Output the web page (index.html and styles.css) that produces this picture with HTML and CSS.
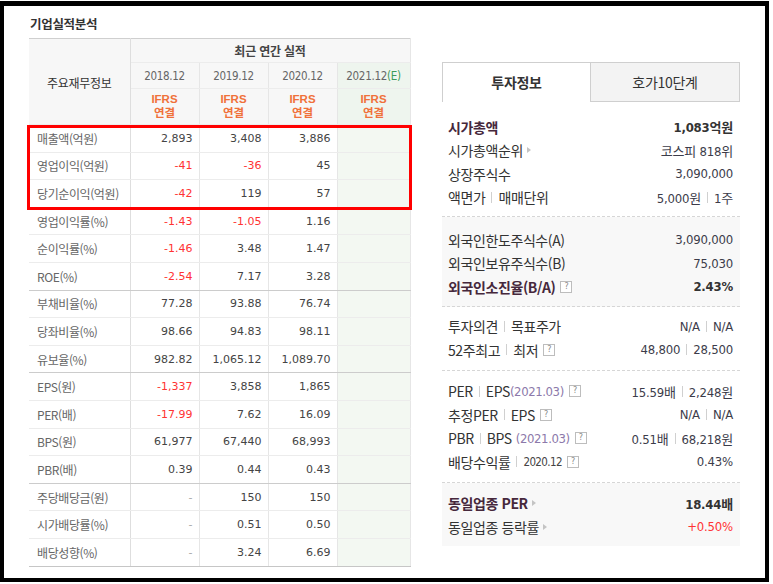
FILE: index.html
```html
<!DOCTYPE html>
<html lang="ko">
<head>
<meta charset="utf-8">
<title>기업실적분석</title>
<link rel="stylesheet" href="styles.css">
</head>
<body>
<div class="frame">
  <section class="perf">
    <h2 class="title">기업실적분석</h2>
    <div class="table-wrap">
      <table class="fin">
        <colgroup>
          <col class="c-lab"><col class="c-y"><col class="c-y"><col class="c-y"><col class="c-e">
        </colgroup>
        <thead>
          <tr class="h1"><th rowspan="3" class="lab-h">주요재무정보</th><th colspan="4" class="grp-h">최근 연간 실적</th></tr>
          <tr class="h2"><th>2018.12</th><th>2019.12</th><th>2020.12</th><th class="est">2021.12<span class="e">(E)</span></th></tr>
          <tr class="h3"><th><span class="ifrs">IFRS<br>연결</span></th><th><span class="ifrs">IFRS<br>연결</span></th><th><span class="ifrs">IFRS<br>연결</span></th><th class="est"><span class="ifrs">IFRS<br>연결</span></th></tr>
        </thead>
        <tbody>
          <tr><th>매출액(억원)</th><td>2,893</td><td>3,408</td><td>3,886</td><td class="est"></td></tr>
          <tr><th>영업이익(억원)</th><td class="neg">-41</td><td class="neg">-36</td><td>45</td><td class="est"></td></tr>
          <tr><th>당기순이익(억원)</th><td class="neg">-42</td><td>119</td><td>57</td><td class="est"></td></tr>
          <tr><th>영업이익률(%)</th><td class="neg">-1.43</td><td class="neg">-1.05</td><td>1.16</td><td class="est"></td></tr>
          <tr><th>순이익률(%)</th><td class="neg">-1.46</td><td>3.48</td><td>1.47</td><td class="est"></td></tr>
          <tr class="grp"><th>ROE(%)</th><td class="neg">-2.54</td><td>7.17</td><td>3.28</td><td class="est"></td></tr>
          <tr><th>부채비율(%)</th><td>77.28</td><td>93.88</td><td>76.74</td><td class="est"></td></tr>
          <tr><th>당좌비율(%)</th><td>98.66</td><td>94.83</td><td>98.11</td><td class="est"></td></tr>
          <tr class="grp"><th>유보율(%)</th><td>982.82</td><td>1,065.12</td><td>1,089.70</td><td class="est"></td></tr>
          <tr><th>EPS(원)</th><td class="neg">-1,337</td><td>3,858</td><td>1,865</td><td class="est"></td></tr>
          <tr><th>PER(배)</th><td class="neg">-17.99</td><td>7.62</td><td>16.09</td><td class="est"></td></tr>
          <tr><th>BPS(원)</th><td>61,977</td><td>67,440</td><td>68,993</td><td class="est"></td></tr>
          <tr class="grp"><th>PBR(배)</th><td>0.39</td><td>0.44</td><td>0.43</td><td class="est"></td></tr>
          <tr><th>주당배당금(원)</th><td class="dash">-</td><td>150</td><td>150</td><td class="est"></td></tr>
          <tr><th>시가배당률(%)</th><td class="dash">-</td><td>0.51</td><td>0.50</td><td class="est"></td></tr>
          <tr class="last"><th>배당성향(%)</th><td class="dash">-</td><td>3.24</td><td>6.69</td><td class="est"></td></tr>
        </tbody>
      </table>
      <div class="highlight"></div>
    </div>
  </section>

  <aside class="invest">
    <div class="tabs">
      <div class="tab on">투자정보</div>
      <div class="tab">호가10단계</div>
    </div>
    <div class="sec s1">
      <div class="row strong"><span class="k">시가총액</span><span class="v">1,083억원</span></div>
      <div class="row"><span class="k">시가총액순위<i class="arr"></i></span><span class="v">코스피 818위</span></div>
      <div class="row"><span class="k">상장주식수</span><span class="v">3,090,000</span></div>
      <div class="row"><span class="k">액면가<i class="sep"></i>매매단위</span><span class="v">5,000원<i class="sep"></i>1주</span></div>
    </div>
    <div class="sec gray s2">
      <div class="row"><span class="k">외국인한도주식수(A)</span><span class="v">3,090,000</span></div>
      <div class="row"><span class="k">외국인보유주식수(B)</span><span class="v">75,030</span></div>
      <div class="row strong"><span class="k">외국인소진율(B/A)<i class="help">?</i></span><span class="v">2.43%</span></div>
    </div>
    <div class="sec s3">
      <div class="row"><span class="k">투자의견<i class="sep"></i>목표주가</span><span class="v">N/A<i class="sep"></i>N/A</span></div>
      <div class="row"><span class="k">52주최고<i class="sep"></i>최저<i class="help">?</i></span><span class="v">48,800<i class="sep"></i>28,500</span></div>
    </div>
    <div class="sec s4">
      <div class="row"><span class="k">PER<i class="sep"></i>EPS<em class="dt">(2021.03)</em><i class="help">?</i></span><span class="v">15.59배<i class="sep"></i>2,248원</span></div>
      <div class="row"><span class="k">추정PER<i class="sep"></i>EPS<i class="help">?</i></span><span class="v">N/A<i class="sep"></i>N/A</span></div>
      <div class="row"><span class="k">PBR<i class="sep"></i>BPS<em class="dt spaced">(2021.03)</em><i class="help">?</i></span><span class="v">0.51배<i class="sep"></i>68,218원</span></div>
      <div class="row"><span class="k">배당수익률<i class="sep"></i><small class="ym">2020.12</small><i class="help">?</i></span><span class="v">0.43%</span></div>
    </div>
    <div class="sec gray s5">
      <div class="row strong"><span class="k">동일업종 PER<i class="arr"></i></span><span class="v">18.44배</span></div>
      <div class="row"><span class="k">동일업종 등락률<i class="arr"></i></span><span class="v up">+0.50%</span></div>
    </div>
  </aside>
</div>
</body>
</html>
```

FILE: styles.css
```css
* { box-sizing: border-box; }

html, body {
  margin: 0;
  padding: 0;
  background: #fff;
}

body {
  font-family: "Noto Sans CJK KR", "Noto Sans", sans-serif;
  color: #333;
}

.frame {
  margin-top: 1px;
  width: 769px;
  height: 581px;
  border: 4px solid #000;
  border-top-width: 5px;
  display: flex;
  align-items: flex-start;
}

/* ---------- left: performance table ---------- */
.perf {
  padding: 10px 0 0 25px;
  width: 406px;
  flex: none;
}

.title {
  margin: 0 0 6px 1px;
  height: 16px;
  line-height: 16px;
  font-size: 12.5px;
  font-weight: bold;
  color: #333;
  letter-spacing: -0.3px;
}

.table-wrap {
  position: relative;
  width: 381px;
}

.fin {
  width: 381px;
  border-collapse: collapse;
  table-layout: fixed;
  border-top: 1px solid #cfcfcf;
}

.c-lab { width: 101px; }
.c-y { width: 69px; }
.c-e { width: 73px; }

.fin th,
.fin td {
  padding: 0;
  border-right: 1px solid #e6e6e6;
  border-bottom: 1px solid #ececec;
}

.fin thead th {
  background: #f7f7f7;
  font-weight: normal;
  text-align: center;
}

.fin .h1 th { height: 24px; }
.fin .h2 th { height: 26px; }
.fin .h3 th { height: 36px; }

.fin .lab-h {
  font-size: 12px;
  color: #333;
  letter-spacing: -0.3px;
  border-right-color: #dedede;
  padding-top: 2px;
}

.fin .grp-h {
  font-size: 12px;
  font-weight: bold;
  color: #444;
  letter-spacing: -0.2px;
}

.fin .h2 th {
  font-family: "DejaVu Sans Condensed", "DejaVu Sans", sans-serif;
  font-size: 11.5px;
  color: #666;
  letter-spacing: -0.3px;
}

.fin .e { color: #3b9a5a; }

.fin thead th.est { background: #eef5ee; }

.ifrs {
  display: inline-block;
  font-family: "Liberation Sans", "Noto Sans CJK KR", sans-serif;
  font-size: 11.5px;
  font-weight: bold;
  line-height: 14px;
  color: #f0713a;
}

.fin tbody th {
  height: 27.6px;
  text-align: left;
  font-weight: normal;
  font-size: 12px;
  color: #666;
  padding-left: 8px;
  letter-spacing: -0.4px;
  border-right-color: #dedede;
  white-space: nowrap;
}

.fin tbody td {
  text-align: right;
  padding-right: 6px;
  font-family: "DejaVu Sans", "Noto Sans", sans-serif;
  font-size: 11px;
  color: #444;
}

.fin tbody td.neg { color: #f33; }
.fin tbody td.dash { color: #aaa; }
.fin tbody td.est { background: #f3f8f2; }

.fin tr.grp th,
.fin tr.grp td { border-bottom: 1px solid #cccccc; }

.fin tr.last th,
.fin tr.last td { border-bottom: 1px solid #c6c6c6; }

.highlight {
  position: absolute;
  left: -2px;
  top: 87px;
  width: 385px;
  height: 85px;
  border: 3px solid #f00;
  pointer-events: none;
}

/* ---------- right: investment info ---------- */
.invest {
  margin: 56px 0 0 32px;
  width: 298px;
  flex: none;
}

.tabs {
  display: flex;
  height: 40px;
}

.tab {
  height: 40px;
  line-height: 38px;
  text-align: center;
  font-size: 14px;
  color: #333;
  letter-spacing: -0.3px;
}

.tab.on {
  width: 148px;
  font-weight: bold;
  border-top: 1px solid #cfcfcf;
  border-left: 1px solid #cfcfcf;
  background: #fff;
}

.tab:not(.on) {
  width: 150px;
  background: #f3f3f3;
  border: 1px solid #cfcfcf;
}

.sec {
  padding: 0 7px 0 6px;
  border-bottom: 1px dashed #d6d6d6;
}

.sec.gray { background: #f8f8f8; }

.s1 { padding-top: 13px; padding-bottom: 7px; }
.s2 { padding-top: 11px; padding-bottom: 7px; }
.s3 { padding-top: 8px; padding-bottom: 8px; }
.s4 { padding-top: 9px; padding-bottom: 8px; }
.s5 { padding-top: 9px; padding-bottom: 7px; border-bottom: 0; }

.row {
  display: flex;
  justify-content: space-between;
  align-items: center;
  height: 23.5px;
  font-size: 14px;
  white-space: nowrap;
}

.k {
  display: flex;
  align-items: center;
  color: #333;
  letter-spacing: -0.4px;
}

.v {
  display: flex;
  align-items: center;
  font-family: "DejaVu Sans Condensed", "Noto Sans CJK KR", sans-serif;
  font-size: 13px;
  color: #3c3c4a;
  letter-spacing: -0.2px;
}

.row.strong .k {
  font-weight: bold;
  color: #46283c;
}

.row.strong .v {
  font-weight: bold;
  color: #333;
}

.v.up { color: #f33; }

.dt {
  font-style: normal;
  color: #8c79aa;
  font-family: "DejaVu Sans Condensed", "Noto Sans", sans-serif;
  font-size: 13px;
}

.dt.spaced { margin-left: 4px; }

.ym {
  font-family: "DejaVu Sans Condensed", "Noto Sans", sans-serif;
  font-size: 11.5px;
  letter-spacing: -0.6px;
  color: #444;
}

.sep {
  display: inline-block;
  width: 1px;
  height: 11px;
  background: #d0d0d0;
  margin: 0 6px;
}

.arr {
  display: inline-block;
  width: 0;
  height: 0;
  margin-left: 4px;
  border-left: 4px solid #c4c4c4;
  border-top: 3px solid transparent;
  border-bottom: 3px solid transparent;
}

.help {
  display: inline-block;
  width: 12px;
  height: 12px;
  margin-left: 5px;
  border: 1px solid #bdbdbd;
  font-style: normal;
  font-weight: normal;
  font-family: "DejaVu Sans", sans-serif;
  font-size: 8px;
  line-height: 10px;
  text-align: center;
  color: #888;
  background: #fff;
}
```
